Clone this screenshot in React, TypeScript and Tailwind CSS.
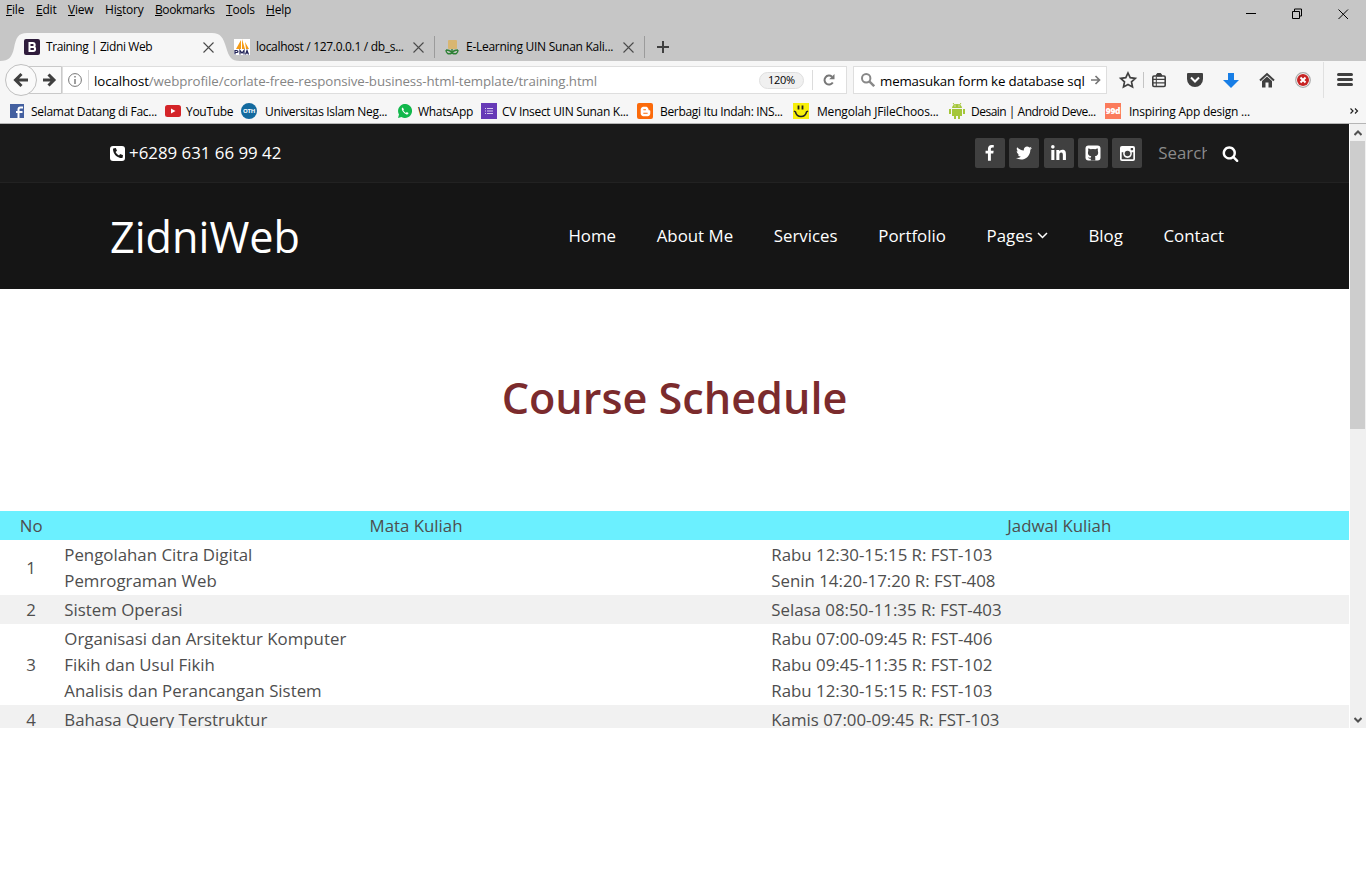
import type { ReactNode } from "react";
import { FaLinkedinIn, FaBloggerB, FaPhoneAlt } from "react-icons/fa";

const menus = [
  { pre: "", key: "F", post: "ile", w: "w-[30px]" },
  { pre: "", key: "E", post: "dit", w: "w-[32px]" },
  { pre: "", key: "V", post: "iew", w: "w-[37px]" },
  { pre: "Hi", key: "s", post: "tory", w: "w-[50px]" },
  { pre: "", key: "B", post: "ookmarks", w: "w-[71px] tracking-[-0.4px]" },
  { pre: "", key: "T", post: "ools", w: "w-[40px]" },
  { pre: "", key: "H", post: "elp", w: "w-[40px]" },
];

function Close({ size = 11, color = "#4a4a4a" }: { size?: number; color?: string }) {
  return (
    <svg width={size} height={size} viewBox="0 0 11 11" fill="none" stroke={color} strokeWidth="1.1" className="shrink-0">
      <path d="M.5.5l10 10M10.5.5l-10 10" />
    </svg>
  );
}

function TitleBar() {
  return (
    <div className="flex h-[33px] items-start">
      <div className="flex pt-[2px] pl-[6px] leading-4 tracking-[-0.2px]">
        {menus.map((m) => (
          <span key={m.key + m.post} className={m.w}>
            {m.pre}
            <span className="underline decoration-1 underline-offset-1">{m.key}</span>
            {m.post}
          </span>
        ))}
      </div>
      <svg width="120" height="28" viewBox="0 0 120 28" className="ml-auto" fill="none" stroke="#000" strokeWidth="1">
        <path d="M0 13.500h10M46.500 11.500h7v7h-7zM48.500 11v-2h7v7h-2M92.500 9.500l9.500 9.500M102 9.500l-9.500 9.500" />
      </svg>
    </div>
  );
}

function TabStrip() {
  return (
    <div className="flex h-[28px] items-center">
      <div className="relative flex h-[28px] w-[236px] shrink-0 items-center">
        <svg width="240" height="28" viewBox="0 0 240 28" className="absolute top-0 left-0">
          <path d="M0 28C9 28 12 24 14 15C16 5 18 0 27 0H212C221 0 223 5 226 14C229 24 231 28 240 28Z" fill="#f6f6f6" />
        </svg>
        <div className="relative flex w-full items-center">
          <svg width="16" height="16" viewBox="0 0 16 16" className="ml-6 shrink-0">
            <rect width="16" height="16" rx="2" fill="#2f1c3c" />
            <path d="M5.500 4h3.200a2 2 0 0 1 0 4H5.500zM5.500 8h3.600a2 2 0 0 1 0 4H5.500z" fill="none" stroke="#fff" strokeWidth="2" />
          </svg>
          <span className="ml-[6px] w-[157px] tracking-[-0.4px]">Training | Zidni Web</span>
          <Close />
        </div>
      </div>
      <svg width="16" height="16" viewBox="0 0 16 16" className="-ml-[2px] shrink-0">
        <rect width="16" height="16" fill="#fff" />
        <path d="M2 10L7 1v9zM8 10V0l3 10zM12 10l-1-7 4 7z" fill="#f59b14" />
        <path d="M1 15.500v-4h1.500q1.500 0 1.500 1t-1.500 1H1M6 15.500v-4l2 2.500 2-2.500v4M11.500 15.500l1.500-4 1.500 4m-2.300-1.500h2" fill="none" stroke="#222458" strokeWidth="1.200" />
      </svg>
      <span className="ml-[6px] w-[157px] shrink-0 tracking-[-0.31px]">localhost / 127.0.0.1 / db_s...</span>
      <Close />
      <div className="ml-[10px] h-[22px] w-px bg-[#9b9b9b]" />
      <svg width="14" height="16" viewBox="0 0 14 16" className="ml-[10px] shrink-0">
        <rect x="3" y="1" width="9" height="9" rx="1" fill="#d8b671" />
        <path d="M7 10v4M1 11c3 0 5 1 6 3-4 2-6 0-6-3M13 11c-3 0-5 1-6 3 4 2 6 0 6-3" fill="none" stroke="#2e8135" strokeWidth="1.400" />
      </svg>
      <span className="ml-[7px] w-[157px] shrink-0 tracking-[-0.27px]">E-Learning UIN Sunan Kali...</span>
      <Close />
      <div className="ml-[10px] h-[22px] w-px bg-[#9b9b9b]" />
      <svg width="12" height="12" viewBox="0 0 12 12" className="ml-[12px]" stroke="#404040" strokeWidth="2">
        <path d="M6 0v12M0 6h12" />
      </svg>
    </div>
  );
}

function NavBar() {
  return (
    <div className="flex h-[38px] items-center">
      <svg width="63" height="34" viewBox="0 0 63 34" className="shrink-0" fill="none">
        <path d="M21 3.500h40.500v27H21z" fill="#fafafa" stroke="#c9c9c9" />
        <circle cx="21" cy="17" r="15.500" fill="#fafafa" stroke="#c0c0c0" />
        <path d="M28 17H16M21.500 11l-6 6 6 6" stroke="#404040" strokeWidth="3" />
        <path d="M43 17h10M48.500 11.500l5.500 5.500-5.500 5.500" stroke="#404040" strokeWidth="3" />
      </svg>
      <div className="-ml-px flex h-[28px] w-[785px] shrink-0 items-center border border-[#dedede] bg-white">
        <svg width="14" height="14" viewBox="0 0 14 14" className="ml-[5px] shrink-0" fill="none" stroke="#777">
          <circle cx="7" cy="7" r="6.400" />
          <path d="M7 6v5M7 3v1.500" strokeWidth="1.400" />
        </svg>
        <div className="ml-[6px] h-5 w-px bg-[#d6d6d6]" />
        <span className="ml-[5px] w-[665px] pt-[3px] text-[13.3px] tracking-[-0.1px] whitespace-nowrap text-[#858585]">
          <span className="text-black">localhost</span>/webprofile/corlate-free-responsive-business-html-template/training.html
        </span>
        <span className="flex h-[17px] w-[45px] shrink-0 items-center justify-center rounded-full border border-[#dfdfdf] bg-[#f0f0f0] pt-px text-[11px] tracking-[-0.3px]">120%</span>
        <div className="ml-[8px] h-5 w-px bg-[#dcdcdc]" />
        <svg width="12" height="12" viewBox="0 0 12 12" className="ml-[10px] shrink-0" fill="none" stroke="#777" strokeWidth="2">
          <path d="M9.800 8.500A4.500 4.500 0 1 1 9 2.700" />
          <path d="M11.500 0v5.300H6.200z" fill="#777" stroke="none" />
        </svg>
      </div>
      <div className="ml-[6px] flex h-[28px] w-[254px] shrink-0 items-center border border-[#dedede] bg-white">
        <svg width="14" height="14" viewBox="0 0 14 14" className="ml-[7px] shrink-0" fill="none" stroke="#888" strokeWidth="2">
          <circle cx="5.200" cy="5.200" r="4.200" />
          <path d="M8.300 8.300l4.900 4.900" strokeWidth="2.400" />
        </svg>
        <span className="ml-[5px] w-[208px] overflow-hidden pt-[3px] text-[13.3px] tracking-[-0.17px] whitespace-nowrap text-black">memasukan form ke database sql</span>
        <svg width="10" height="10" viewBox="0 0 10 10" className="ml-[3px] shrink-0" fill="none" stroke="#777" strokeWidth="1.700">
          <path d="M0 5h8M4.500 1l4 4-4 4" />
        </svg>
      </div>
      <svg width="259" height="38" viewBox="1107 61 259 38" className="shrink-0" fill="none">
        <path d="M1128 73l2.200 4.700 5.100.6-3.800 3.500 1 5.100-4.500-2.500-4.500 2.500 1-5.100-3.800-3.500 5.100-.6z" stroke="#404040" strokeWidth="1.700" />
        <path d="M1143.500 72v16" stroke="#c4c4c4" />
        <rect x="1152.800" y="76" width="12.400" height="10.500" rx="1.200" stroke="#404040" strokeWidth="1.600" />
        <path d="M1156 76l1.200-2.500h3.600L1162 76z" fill="#404040" stroke="#404040" />
        <path d="M1153 79.300h12M1153 82.800h12" stroke="#404040" strokeWidth="1.300" />
        <path d="M1156.300 77v9" stroke="#404040" strokeWidth="1" />
        <path d="M1188 73h14q1 0 1 1v5a8 8 0 0 1-16 0v-5q0-1 1-1" fill="#404040" />
        <path d="M1191 77.500l4 4 4-4" stroke="#fff" strokeWidth="2" />
        <path d="M1228 73h6v7h5l-8 8-8-8h5z" fill="#177ee6" />
        <path d="M1260 80.500l7-6.500 7 6.500" stroke="#404040" strokeWidth="2" />
        <path d="M1262 81l5-4.500 5 4.500v6.500h-3.500v-5h-3v5h-3.500z" fill="#404040" />
        <circle cx="1303" cy="80" r="7.300" fill="#fff" stroke="#aaa" strokeWidth="1.200" />
        <circle cx="1303" cy="80" r="6" fill="#c72424" />
        <path d="M1300.500 77.500l5 5m0-5l-5 5" stroke="#fff" strokeWidth="2" />
        <path d="M1323.500 62v36" stroke="#e0e0e0" />
        <path d="M1338.500 74.500h13M1338.500 79.500h13M1338.500 84.500h13" stroke="#404040" strokeWidth="3" strokeLinecap="round" />
      </svg>
    </div>
  );
}

function Bookmark({ icon, width, gap, track, children }: { icon: ReactNode; width: string; gap: string; track: string; children: string }) {
  return (
    <div className={`flex shrink-0 items-center whitespace-nowrap ${width} ${gap} ${track}`}>
      <span className="flex size-4 shrink-0 items-center justify-center">{icon}</span>
      <span className="pt-[2px]">{children}</span>
    </div>
  );
}

function Bookmarks() {
  return (
    <div className="flex h-[24px] items-center pl-[9px]">
      <Bookmark width="w-[156px]" gap="gap-[6px]" track="tracking-[-0.3px]" icon={
        <svg width="14" height="14" viewBox="0 0 14 14"><rect width="14" height="14" fill="#4460a0" /><path d="M8.500 14V5.500q0-2 2-2H13M6 8h6.500" fill="none" stroke="#fff" strokeWidth="2" /></svg>
      }>Selamat Datang di Fac...</Bookmark>
      <Bookmark width="w-[76px]" gap="gap-[5px]" track="tracking-[-0.3px]" icon={
        <svg width="16" height="12" viewBox="0 0 16 12"><rect width="16" height="12" rx="2.500" fill="#d42428" /><path d="M6 3.500v5L10.500 6z" fill="#fff" /></svg>
      }>YouTube</Bookmark>
      <Bookmark width="w-[156px]" gap="gap-[8px]" track="tracking-[-0.33px]" icon={
        <span className="flex size-4 items-center justify-center rounded-full bg-[#136a9f] text-[6px] font-bold tracking-[-0.2px] text-white">OTH</span>
      }>Universitas Islam Neg...</Bookmark>
      <Bookmark width="w-[84px]" gap="gap-[5px]" track="tracking-[-0.3px]" icon={
        <svg width="14" height="14" viewBox="0 0 14 14"><path d="M0 14l1-3.500A7 7 0 1 1 3.500 13z" fill="#12b84c" /><path d="M4.500 3.500q-1.500 1 0 3.500t4 3.500q2 0 2-1.500L8.800 8l-.9.900Q6 8 5.300 6.200L6 5.300z" fill="#fff" /></svg>
      }>WhatsApp</Bookmark>
      <Bookmark width="w-[156px]" gap="gap-[5px]" track="tracking-[-0.3px]" icon={
        <svg width="16" height="16" viewBox="0 0 16 16"><rect width="16" height="16" fill="#673ab7" /><path d="M4 5.500h1M4 8h1M4 10.500h1M6 5.500h6M6 8h6M6 10.500h6" stroke="#d7c9ef" /></svg>
      }>CV Insect UIN Sunan K...</Bookmark>
      <Bookmark width="w-[156px]" gap="gap-[7px]" track="tracking-[-0.33px]" icon={
        <span className="flex size-4 items-center justify-center rounded-[2px] bg-[#fb6a0a]"><FaBloggerB size={11} color="#fff" /></span>
      }>Berbagi Itu Indah: INS...</Bookmark>
      <Bookmark width="w-[156px]" gap="gap-[8px]" track="tracking-[-0.18px]" icon={
        <svg width="16" height="16" viewBox="0 0 16 16"><rect width="16" height="16" fill="#f7ef0b" /><path d="M5.500 2.500v4M9.500 2.500v4" stroke="#222" strokeWidth="1.800" /><path d="M1 8l1.500 1q1 4.500 5.500 4.500T13.500 9L15 8" fill="none" stroke="#222" strokeWidth="1.500" /></svg>
      }>Mengolah JFileChoos...</Bookmark>
      <Bookmark width="w-[156px]" gap="gap-[6px]" track="tracking-[-0.5px]" icon={
        <svg width="16" height="16" viewBox="0 0 16 16" fill="#a4c639"><path d="M3 5q.5-4 5-4t5 4zM3 6h10v7H3zM0 6h2v5H0zM14 6h2v5h-2zM5 13h2v3H5zM9 13h2v3H9z" /><path d="M4 0l1.500 2M12 0l-1.500 2" stroke="#a4c639" /><path d="M5.500 3h1M9.500 3h1" stroke="#fff" /></svg>
      }>Desain | Android Deve...</Bookmark>
      <Bookmark width="w-[170px]" gap="gap-[8px]" track="tracking-[-0.23px]" icon={
        <span className="flex size-4 items-center justify-center bg-[#fb7b5b] text-[8.5px] font-extrabold tracking-[-0.3px] text-white">99d</span>
      }>Inspiring App design ...</Bookmark>
      <svg width="9" height="6" viewBox="0 0 9 6" className="mr-[7px] ml-auto" fill="none" stroke="#222" strokeWidth="1.200">
        <path d="M.5.5L3 3 .5 5.500M5 .5L7.500 3 5 5.500" />
      </svg>
    </div>
  );
}

function Social({ children }: { children: ReactNode }) {
  return <span className="flex size-[30px] items-center justify-center rounded-[2px] bg-[#404040] text-white">{children}</span>;
}

function SiteHeader() {
  return (
    <header className="text-white">
      <div className="flex h-[59px] items-center border-b border-[#222] bg-[#1a1a1a] pl-[110px]">
        <span className="flex size-[15px] items-center justify-center rounded-[3px] bg-white">
          <FaPhoneAlt size={10} color="#1a1a1a" className="rotate-90 -scale-x-100" />
        </span>
        <span className="ml-[4px] w-[846px] text-[16.85px]">+6289 631 66 99 42</span>
        <div className="flex gap-[4.300px]">
          <Social>
            <svg width="17" height="17" viewBox="0 0 1792 1792" fill="currentColor" className="-ml-px"><path d="M1343 12v264h-157q-86 0-116 36t-30 108v189h293l-39 296h-254v759h-306v-759h-255v-296h255v-218q0-186 104-288.500t277-102.500q147 0 228 12z" /></svg>
          </Social>
          <Social>
            <svg width="18" height="18" viewBox="0 0 1792 1792" fill="currentColor"><path d="M1684 408q-67 98-162 167 1 14 1 42 0 130-38 259.500t-115.500 248.500-184.500 210.500-258 146-323 54.500q-271 0-496-145 35 4 78 4 225 0 401-138-105-2-188-64.500t-114-159.500q33 5 61 5 43 0 85-11-112-23-185.500-111.500t-73.500-205.500v-4q68 38 146 41-66-44-105-115t-39-154q0-88 44-163 121 149 294.500 238.500t371.500 99.500q-8-38-8-74 0-134 94.500-228.500t228.500-94.500q140 0 236 102 109-21 205-78-37 115-142 178 93-10 186-50z" /></svg>
          </Social>
          <Social><FaLinkedinIn size={17} /></Social>
          <Social>
            <svg width="16" height="16" viewBox="0 0 16 16">
              <rect x=".5" y=".5" width="15" height="15" rx="3" fill="#fff" />
              <path d="M3.500 3.200l2 1q2.500-.5 5 0l2-1q.6 1 .3 2.300 1.500 5-3 5.800.5.500.5 1.400V15.500H5.800v-1.700q-2 .4-2.800-1.600 1.800.8 2.800.2.100-.8.500-1.100-4.500-.8-3-5.800-.4-1.300.2-2.300z" fill="#404040" />
            </svg>
          </Social>
          <Social>
            <svg width="15" height="15" viewBox="0 0 15 15">
              <rect width="15" height="15" rx="2" fill="#fff" />
              <path d="M1.700 6.300h1.600a4.400 4.400 0 1 0 8.400 0h1.600v6.400q0 .6-.6.600H2.300q-.6 0-.6-.6z" fill="#404040" />
              <circle cx="7.500" cy="7.500" r="2.800" fill="#404040" />
              <rect x="10.700" y="1.900" width="2.400" height="2.300" rx=".4" fill="#404040" />
            </svg>
          </Social>
        </div>
        <span className="ml-[16px] w-[49px] overflow-hidden text-[16.85px] text-[#8b8b8b]">Search</span>
        <svg width="17" height="17" viewBox="0 0 1792 1792" className="ml-[15px]" fill="currentColor"><path d="M1216 832q0-185-131.500-316.500t-316.500-131.500-316.500 131.500-131.500 316.500 131.500 316.500 316.500 131.500 316.500-131.500 131.500-316.500zm512 832q0 52-38 90t-90 38q-54 0-90-38l-343-342q-179 124-399 124-143 0-273.500-55.500t-225-150-150-225-55.500-273.500 55.500-273.500 150-225 225-150 273.500-55.500 273.500 55.500 225 150 150 225 55.500 273.500q0 220-124 399l343 343q37 37 37 90z" /></svg>
      </div>
      <div className="flex h-[106px] items-center justify-between bg-[#151515] pr-[125px] pl-[110px]">
        <span className="pt-[2px] text-[43.2px] leading-none">ZidniWeb</span>
        <nav className="flex gap-[40.700px] text-[16.85px]">
          <span>Home</span>
          <span>About Me</span>
          <span>Services</span>
          <span>Portfolio</span>
          <span className="flex items-center gap-[4px]">
            Pages
            <svg width="11" height="7" viewBox="0 0 11 7" fill="none" stroke="currentColor" strokeWidth="1.500"><path d="M1 1l4.500 4.500L10 1" /></svg>
          </span>
          <span>Blog</span>
          <span>Contact</span>
        </nav>
      </div>
    </header>
  );
}

const schedule = [
  { no: 1, items: [["Pengolahan Citra Digital", "Rabu 12:30-15:15 R: FST-103"], ["Pemrograman Web", "Senin 14:20-17:20 R: FST-408"]] },
  { no: 2, items: [["Sistem Operasi", "Selasa 08:50-11:35 R: FST-403"]] },
  { no: 3, items: [["Organisasi dan Arsitektur Komputer", "Rabu 07:00-09:45 R: FST-406"], ["Fikih dan Usul Fikih", "Rabu 09:45-11:35 R: FST-102"], ["Analisis dan Perancangan Sistem", "Rabu 12:30-15:15 R: FST-103"]] },
  { no: 4, items: [["Bahasa Query Terstruktur", "Kamis 07:00-09:45 R: FST-103"]] },
];

function Schedule() {
  return (
    <div className="text-[16.83px] leading-[26px] text-[#4e4e4e]">
      <div className="grid grid-cols-[62.500px_707px_579.500px] bg-[#6bf0ff] pt-[2px] pb-px text-center">
        <span>No</span>
        <span>Mata Kuliah</span>
        <span>Jadwal Kuliah</span>
      </div>
      {schedule.map((row) => (
        <div key={row.no} className="grid grid-cols-[62.300px_707px_579.700px] items-center pt-[2px] pb-px even:bg-white odd:bg-[#f1f1f1]">
          <span className="text-center">{row.no}</span>
          <div className="pl-[2px]">{row.items.map((i) => <div key={i[0]}>{i[0]}</div>)}</div>
          <div className="pl-[2px]">{row.items.map((i) => <div key={i[0]}>{i[1]}</div>)}</div>
        </div>
      ))}
    </div>
  );
}

function Scrollbar() {
  return (
    <div className="flex w-[17px] flex-col items-center border-l border-white bg-[#f0f0f0]">
      <div className="flex h-[17px] items-center">
        <svg width="8" height="6" viewBox="0 0 8 6" fill="none" stroke="#505050" strokeWidth="2"><path d="M.5 5L4 1.500 7.500 5" /></svg>
      </div>
      <div className="h-[288px] w-[15px] self-start bg-[#cdcdcd]" />
      <div className="mt-auto flex h-[17px] items-center">
        <svg width="8" height="6" viewBox="0 0 8 6" fill="none" stroke="#505050" strokeWidth="2"><path d="M.5 1L4 4.500 7.500 1" /></svg>
      </div>
    </div>
  );
}

export default function App() {
  return (
    <div className="h-[875px] w-[1366px] overflow-hidden bg-white font-['Open_Sans',sans-serif]">
      <div className="text-[12px] text-black">
        <div className="bg-[#c6c6c6]">
          <TitleBar />
          <TabStrip />
        </div>
        <div className="h-[63px] border-b border-[#b5b5b5] bg-[#f6f6f6]">
          <NavBar />
          <Bookmarks />
        </div>
      </div>
      <div className="flex h-[604px]">
        <main className="w-[1349px] overflow-hidden">
          <SiteHeader />
          <h1 className="flex h-[222px] items-center justify-center pb-[4px] text-[43.2px] font-semibold text-[#7b2b2d]">Course Schedule</h1>
          <Schedule />
        </main>
        <Scrollbar />
      </div>
    </div>
  );
}
